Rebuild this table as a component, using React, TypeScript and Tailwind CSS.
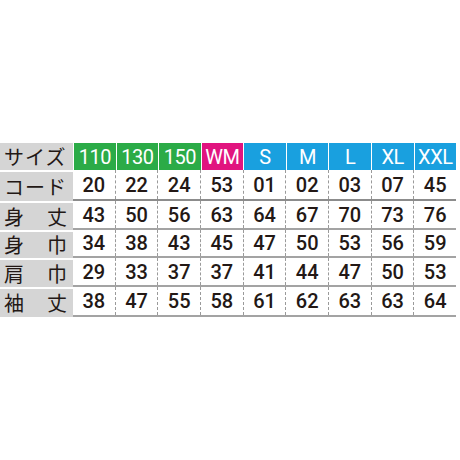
import React from 'react';

const sizes = [
  { label: '110', color: 'bg-[#2bab47]' },
  { label: '130', color: 'bg-[#2bab47]' },
  { label: '150', color: 'bg-[#2bab47]' },
  { label: 'WM', color: 'bg-[#e1147f]' },
  { label: 'S', color: 'bg-[#19a0df]' },
  { label: 'M', color: 'bg-[#19a0df]' },
  { label: 'L', color: 'bg-[#19a0df]' },
  { label: 'XL', color: 'bg-[#19a0df]' },
  { label: 'XXL', color: 'bg-[#19a0df]' },
];

const rows = [
  { name: ['コード'], values: ['20', '22', '24', '53', '01', '02', '03', '07', '45'], h: 'h-[31px]', border: 'border-b-2 border-[#8c8c8c]' },
  { name: ['身', '丈'], values: ['43', '50', '56', '63', '64', '67', '70', '73', '76'], h: 'h-[29px]', border: 'border-b-2 border-[#a3a3a3]' },
  { name: ['身', '巾'], values: ['34', '38', '43', '45', '47', '50', '53', '56', '59'], h: 'h-[28px]', border: 'border-b-2 border-[#a3a3a3]' },
  { name: ['肩', '巾'], values: ['29', '33', '37', '37', '41', '44', '47', '50', '53'], h: 'h-[29px]', border: 'border-b-2 border-[#a3a3a3]' },
  { name: ['袖', '丈'], values: ['38', '47', '55', '58', '61', '62', '63', '63', '64'], h: 'h-[30px]', border: 'border-b-2 border-[#a3a3a3]' },
];

const jp = "font-['Noto_Sans_CJK_JP',sans-serif]";
const num = "font-['Roboto',sans-serif]";

export default function App() {
  return (
    <div className="h-[460px] w-[460px] bg-white pt-[143px]">
      <div className="w-[456px] text-[#231815]">
        {/* header */}
        <div className="flex h-[27px]">
          <div className={`flex w-[73px] items-center bg-[#d5d5d5] pl-[4px] text-[20px] leading-none tracking-[1px] ${jp}`}>
            サイズ
          </div>
          {sizes.map((s) => (
            <div
              key={s.label}
              className={`flex flex-1 items-center justify-center border-l border-white text-[20px] leading-none tracking-[-0.5px] text-white ${s.color} ${num}`}
            >
              {s.label}
            </div>
          ))}
        </div>

        {rows.map((r, i) => (
          <div key={i} className={`flex ${r.h}`}>
            <div
              className={`flex w-[73px] items-center border-t-2 border-white bg-[#d5d5d5] pl-[4px] pr-[6px] text-[20px] leading-none ${jp} ${
                r.name.length > 1 ? 'justify-between' : 'tracking-[1px]'
              }`}
            >
              {r.name.map((n) => (
                <span key={n}>{n}</span>
              ))}
            </div>
            <div className={`flex flex-1 ${r.border}`}>
              {r.values.map((v, j) => (
                <div
                  key={j}
                  className={`flex flex-1 items-center justify-center text-[20px] font-medium leading-none ${num} ${
                    j > 0 ? 'border-l border-dashed border-[#9a9a9a]' : ''
                  }`}
                >
                  {v}
                </div>
              ))}
            </div>
          </div>
        ))}
      </div>
    </div>
  );
}
